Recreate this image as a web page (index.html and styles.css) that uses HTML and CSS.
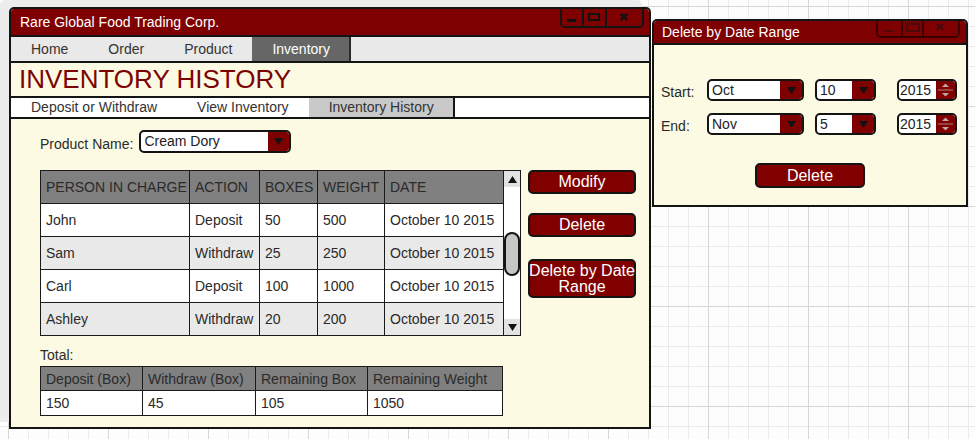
FILE: index.html
```html
<!DOCTYPE html>
<html>
<head>
<meta charset="utf-8">
<title>Inventory History</title>
<link rel="stylesheet" href="styles.css">
</head>
<body>
<div class="desk">
  <section class="window main">
    <header class="titlebar">
      <span class="title">Rare Global Food Trading Corp.</span>
      <svg class="winctl" width="84" height="19" viewBox="0 0 84 19">
        <path d="M1 0V14a4 4 0 0 0 4 4H79a4 4 0 0 0 4-4V0" fill="none" stroke="#141414" stroke-width="2"/>
        <path d="M23 0V18M46 0V18" stroke="#141414" stroke-width="2"/>
        <rect x="7" y="10" width="9" height="3" fill="#111"/>
        <rect x="29" y="5" width="10" height="6" fill="none" stroke="#111" stroke-width="2"/>
        <path d="M61 5l6 6M67 5l-6 6" stroke="#111" stroke-width="2.6"/>
      </svg>
    </header>
    <nav class="tabs">
      <span class="tab">Home</span>
      <span class="tab">Order</span>
      <span class="tab">Product</span>
      <span class="tab active">Inventory</span>
    </nav>
    <h1 class="heading">INVENTORY HISTORY</h1>
    <nav class="subtabs">
      <span class="subtab">Deposit or Withdraw</span>
      <span class="subtab">View Inventory</span>
      <span class="subtab active">Inventory History</span>
    </nav>
    <div class="content">
      <div class="field">
        <span class="label">Product Name:</span>
        <div class="select product">
          <span class="val">Cream Dory</span>
          <span class="arrow"><svg width="9" height="7" viewBox="0 0 9 7"><path d="M0 0H9L4.5 7Z" fill="#111"/></svg></span>
        </div>
      </div>
      <div class="list-row">
        <div class="list">
          <table class="data">
            <colgroup><col class="c1"><col class="c2"><col class="c3"><col class="c4"><col class="c5"></colgroup>
            <thead>
              <tr><th>PERSON IN CHARGE</th><th>ACTION</th><th>BOXES</th><th>WEIGHT</th><th>DATE</th></tr>
            </thead>
            <tbody>
              <tr><td>John</td><td>Deposit</td><td>50</td><td>500</td><td>October 10 2015</td></tr>
              <tr class="alt"><td>Sam</td><td>Withdraw</td><td>25</td><td>250</td><td>October 10 2015</td></tr>
              <tr><td>Carl</td><td>Deposit</td><td>100</td><td>1000</td><td>October 10 2015</td></tr>
              <tr class="alt"><td>Ashley</td><td>Withdraw</td><td>20</td><td>200</td><td>October 10 2015</td></tr>
            </tbody>
          </table>
          <div class="scrollbar">
            <div class="sb-btn"><svg width="9" height="7" viewBox="0 0 9 7"><path d="M0 7H9L4.5 0Z" fill="#111"/></svg></div>
            <div class="sb-track"><div class="sb-thumb"></div></div>
            <div class="sb-btn"><svg width="9" height="7" viewBox="0 0 9 7"><path d="M0 0H9L4.5 7Z" fill="#111"/></svg></div>
          </div>
        </div>
        <div class="actions">
          <div class="btn">Modify</div>
          <div class="btn second">Delete</div>
          <div class="btn tall"><span>Delete by Date<br>Range</span></div>
        </div>
      </div>
      <div class="total-label">Total:</div>
      <table class="totals">
        <colgroup><col class="t1"><col class="t2"><col class="t3"><col class="t4"></colgroup>
        <thead>
          <tr><th>Deposit (Box)</th><th>Withdraw (Box)</th><th>Remaining Box</th><th>Remaining Weight</th></tr>
        </thead>
        <tbody>
          <tr><td>150</td><td>45</td><td>105</td><td>1050</td></tr>
        </tbody>
      </table>
    </div>
  </section>

  <section class="window dialog">
    <header class="titlebar">
      <span class="title">Delete by Date Range</span>
      <svg class="winctl" width="84" height="17" viewBox="0 0 84 17">
        <path d="M1 0V12a4 4 0 0 0 4 4H79a4 4 0 0 0 4-4V0" fill="none" stroke="#3a0000" stroke-width="2"/>
        <path d="M26 0V16M47 0V16" stroke="#3a0000" stroke-width="2"/>
        <rect x="9" y="9" width="8" height="2" fill="#4a0a0a"/>
        <rect x="31" y="3" width="12" height="7" fill="none" stroke="#4a0a0a" stroke-width="2"/>
        <path d="M61 3l6 6M67 3l-6 6" stroke="#4a0a0a" stroke-width="2.4"/>
      </svg>
    </header>
    <div class="dbody">
      <div class="drow">
        <span class="dlabel">Start:</span>
        <div class="select month"><span class="val">Oct</span><span class="arrow"><svg width="9" height="7" viewBox="0 0 9 7"><path d="M0 0H9L4.5 7Z" fill="#111"/></svg></span></div>
        <div class="select day"><span class="val">10</span><span class="arrow"><svg width="9" height="7" viewBox="0 0 9 7"><path d="M0 0H9L4.5 7Z" fill="#111"/></svg></span></div>
        <div class="select year"><span class="val">2015</span><span class="spin"><svg width="19" height="18" viewBox="0 0 19 18"><path d="M6 6H13L9.5 2.5Z" fill="#c9a3a3"/><path d="M2 9H17" stroke="#b58080" stroke-width="1"/><path d="M6 12H13L9.5 15.5Z" fill="#c9a3a3"/></svg></span></div>
      </div>
      <div class="drow">
        <span class="dlabel">End:</span>
        <div class="select month"><span class="val">Nov</span><span class="arrow"><svg width="9" height="7" viewBox="0 0 9 7"><path d="M0 0H9L4.5 7Z" fill="#111"/></svg></span></div>
        <div class="select day"><span class="val">5</span><span class="arrow"><svg width="9" height="7" viewBox="0 0 9 7"><path d="M0 0H9L4.5 7Z" fill="#111"/></svg></span></div>
        <div class="select year"><span class="val">2015</span><span class="spin"><svg width="19" height="18" viewBox="0 0 19 18"><path d="M6 6H13L9.5 2.5Z" fill="#c9a3a3"/><path d="M2 9H17" stroke="#b58080" stroke-width="1"/><path d="M6 12H13L9.5 15.5Z" fill="#c9a3a3"/></svg></span></div>
      </div>
      <div class="btn dbtn">Delete</div>
    </div>
  </section>
</div>
</body>
</html>
```

FILE: styles.css
```css
html, body {
  margin: 0;
  padding: 0;
}

body {
  width: 975px;
  height: 439px;
  overflow: hidden;
  font-family: "Liberation Sans", Arial, sans-serif;
  font-size: 14px;
  color: #2a2a2a;
  background-color: #fdfdfd;
  background-image:
    linear-gradient(90deg, #d6d6d6 1px, transparent 1px),
    linear-gradient(180deg, #d6d6d6 1px, transparent 1px),
    linear-gradient(90deg, #ebebeb 1px, transparent 1px),
    linear-gradient(180deg, #ebebeb 1px, transparent 1px);
  background-size: 100px 100px, 100px 100px, 20px 20px, 20px 20px;
  background-position: 8px 6px;
}

.desk {
  display: flex;
  align-items: flex-start;
  gap: 1px;
  padding: 7px 0 0 9px;
}

.window {
  box-sizing: border-box;
  display: flex;
  flex-direction: column;
  border: 2px solid #141414;
  border-radius: 5px 5px 0 0;
  background: #fcfae2;
  overflow: hidden;
}

.main {
  width: 642px;
  height: 422px;
  flex: none;
  box-shadow: -9px -7px 0 0 #ececec;
}

.titlebar {
  display: flex;
  align-items: flex-start;
  flex: none;
  height: 26px;
  background: #7f0000;
  border-bottom: 2px solid #141414;
  color: #fff;
}

.titlebar .title {
  line-height: 26px;
  padding-left: 9px;
}

.winctl {
  display: block;
  margin-left: auto;
  margin-right: 5px;
}

/* main tabs */
.tabs {
  display: flex;
  flex: none;
  height: 24px;
  background: #e9e9e9;
  border-bottom: 2px solid #141414;
}

.tab {
  padding: 0 20px;
  line-height: 24px;
  color: #333;
}

.tab.active {
  background: #666;
  color: #fff;
  border-right: 2px solid #2a2a2a;
  padding-right: 19px;
}

.heading {
  flex: none;
  margin: 0;
  height: 33px;
  line-height: 33px;
  padding-left: 8px;
  font-size: 26px;
  font-weight: normal;
  color: #7d0303;
}

.subtabs {
  display: flex;
  flex: none;
  height: 19px;
  background: #fff;
  border-top: 2px solid #141414;
  border-bottom: 2px solid #141414;
}

.subtab {
  padding: 0 20px;
  line-height: 19px;
  color: #333;
}

.subtab.active {
  background: #c9c9c9;
  border-right: 2px solid #141414;
  padding-right: 19px;
}

/* content */
.content {
  flex: 1;
  padding: 11px 0 0 29px;
}

.field {
  display: flex;
  align-items: center;
  gap: 6px;
}

.label {
  padding-top: 4px;
  line-height: 16px;
  color: #2a2a2a;
}

.select {
  box-sizing: border-box;
  display: flex;
  height: 23px;
  border: 2px solid #141414;
  border-radius: 5px;
  background: #fff;
  overflow: hidden;
}

.select .val {
  flex: 1;
  padding-left: 3px;
  line-height: 18px;
  color: #222;
}

.select .arrow {
  flex: none;
  width: 21px;
  display: flex;
  align-items: center;
  justify-content: center;
  background: #7f0000;
}

.select .arrow svg {
  display: block;
}

.product {
  width: 152px;
}

/* data table */
.list-row {
  display: flex;
  align-items: flex-start;
  gap: 7px;
  margin-top: 17px;
}

.list {
  display: flex;
}

table {
  border-collapse: collapse;
  table-layout: fixed;
}

.data {
  width: 463px;
}

.c1 { width: 149px; }
.c2 { width: 70px; }
.c3 { width: 58px; }
.c4 { width: 67px; }
.c5 { width: 119px; }

.data th,
.data td {
  height: 32px;
  padding: 0 0 0 5px;
  border: 1px solid #1a1a1a;
  text-align: left;
  font-weight: normal;
  white-space: nowrap;
  overflow: hidden;
}

th {
  background: #808080;
  color: #2a2a2a;
}

td {
  background: #fff;
  color: #2a2a2a;
}

tr.alt td {
  background: #e9e9e9;
}

.scrollbar {
  box-sizing: border-box;
  width: 17px;
  height: 166px;
  display: flex;
  flex-direction: column;
  border: 1px solid #1a1a1a;
  border-left: none;
  background: #fff;
}

.sb-btn {
  flex: none;
  height: 16px;
  display: flex;
  align-items: center;
  justify-content: center;
  background: #e2e2e2;
}

.sb-btn svg {
  display: block;
}

.sb-track {
  flex: 1;
}

.sb-thumb {
  box-sizing: border-box;
  height: 44px;
  margin-top: 45px;
  border: 2px solid #141414;
  border-radius: 8px;
  background: #c6c6c6;
}

/* buttons */
.actions {
  display: flex;
  flex-direction: column;
  width: 108px;
}

.btn {
  box-sizing: border-box;
  display: flex;
  align-items: center;
  justify-content: center;
  height: 24px;
  border: 2px solid #141414;
  border-radius: 5px;
  background: #800000;
  color: #fff;
  font-size: 16px;
  line-height: 16px;
  text-align: center;
  white-space: nowrap;
}

.btn.second {
  margin-top: 19px;
}

.btn.tall {
  height: 39px;
  margin-top: 22px;
}

.btn span {
  flex: none;
}

/* totals */
.total-label {
  margin-top: 11px;
  line-height: 16px;
}

.totals {
  margin-top: 3px;
  width: 462px;
}

.t1 { width: 102px; }
.t2 { width: 113px; }
.t3 { width: 112px; }
.t4 { width: 135px; }

.totals th,
.totals td {
  padding: 0 0 0 5px;
  border: 1px solid #1a1a1a;
  text-align: left;
  font-weight: normal;
  white-space: nowrap;
}

.totals th {
  height: 23px;
}

.totals td {
  height: 24px;
}

/* dialog */
.dialog {
  width: 316px;
  height: 188px;
  flex: none;
  margin-top: 12px;
}

.dialog .titlebar {
  height: 22px;
}

.dialog .title {
  line-height: 22px;
  padding-left: 8px;
}

.dialog .winctl {
  margin-right: 6px;
}

.dbody {
  flex: 1;
  display: flex;
  flex-direction: column;
  padding-top: 34px;
}

.drow {
  display: flex;
  align-items: center;
  padding-left: 7px;
}

.drow + .drow {
  margin-top: 12px;
}

.drow .select {
  height: 22px;
}

.dlabel {
  width: 46px;
  padding-top: 4px;
  line-height: 16px;
}

.month {
  width: 97px;
}

.day {
  width: 61px;
  margin-left: 11px;
}

.month .arrow,
.day .arrow {
  width: 22px;
}

.year {
  width: 60px;
  margin-left: 21px;
}

.year .val {
  padding-left: 1px;
}

.spin {
  flex: none;
  width: 19px;
  display: flex;
  align-items: center;
  background: #7f0000;
}

.spin svg {
  display: block;
}

.dbtn {
  align-self: center;
  width: 110px;
  height: 25px;
  margin-top: 28px;
}
```
